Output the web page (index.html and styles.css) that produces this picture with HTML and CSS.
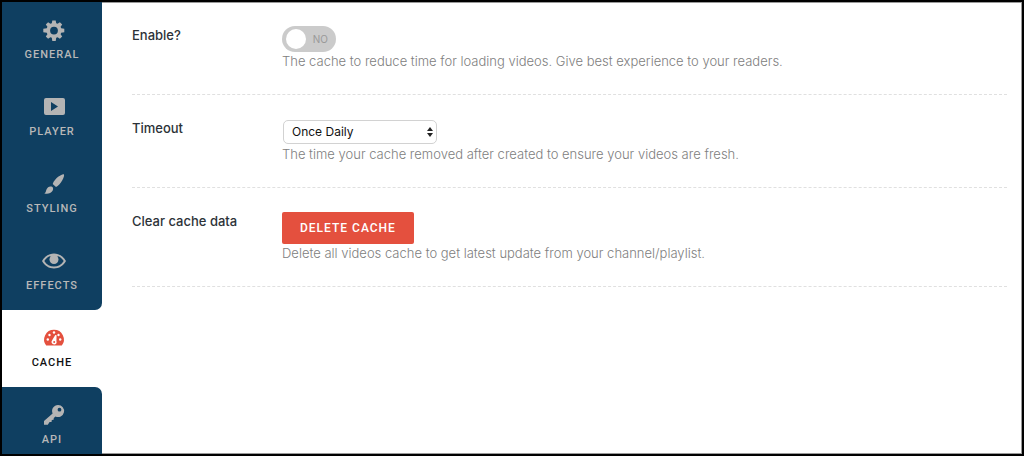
FILE: index.html
```html
<!DOCTYPE html>
<html lang="en">
<head>
<meta charset="utf-8">
<title>Cache settings</title>
<link rel="stylesheet" href="styles.css">
</head>
<body>
<div class="frame">
  <nav class="sidebar" aria-label="Settings sections">
    <a class="tab" href="#general">
      <svg class="icon" viewBox="0 0 20 20" aria-hidden="true"><path fill-rule="evenodd" d="M8.300.5h3.400l.5 2.700 1.400.6 2.300-1.600 2.300 2.300L16.600 6.800l.6 1.400 3.100.5v3.600l-3.100.5-.6 1.400 1.600 2.300-2.300 2.300-2.300-1.600-1.400.6-.5 3.300H8.300l-.5-3.300-1.400-.6-2.300 1.600-2.300-2.300 1.600-2.300-.6-1.400-3.500-.5V8.700l3.500-.5.6-1.400L1.800 4.500l2.300-2.300 2.300 1.600 1.400-.6zM10 6.700a3.900 3.900 0 1 0 0 7.800A3.900 3.900 0 0 0 10 6.700z"/></svg>
      <span>GENERAL</span>
    </a>
    <a class="tab" href="#player">
      <svg class="icon" viewBox="0 0 20 20" aria-hidden="true"><path fill-rule="evenodd" d="M2 1h17q2 0 2 2v13q0 2-2 2H2q-2 0-2-2V3q0-2 2-2zM7 5v9l7-4.500z"/></svg>
      <span>PLAYER</span>
    </a>
    <a class="tab" href="#styling">
      <svg class="icon" viewBox="0 0 20 20" aria-hidden="true"><path d="M19.800.3c.7.7.1 3.200-1.500 5.900-1.700 3-4.200 5.800-6.300 6.800L8.700 9.900C9.600 7.300 12 4.500 14.500 2.600 17 .7 19.100-.3 19.800.3zM7.400 12.600c1.700.5 2.300 2.300 1.200 4.100C7 19.400 3 20.400.3 19.200c1.700-.4 1.500-2 2.300-3.900.9-2.200 2.800-3.300 4.800-2.700z"/></svg>
      <span>STYLING</span>
    </a>
    <a class="tab" href="#effects">
      <svg class="icon icon-wide" viewBox="0 0 24 20" aria-hidden="true"><path fill-rule="evenodd" d="M12 2.500c5 0 9.300 2.700 12 7.500-2.700 4.800-7 7.500-12 7.500S2.700 14.800 0 10c2.700-4.800 7-7.500 12-7.500zM7.600 5.200C5.400 6.200 3.700 7.800 2.300 10c2.300 3.700 5.700 5.600 9.700 5.600s7.400-1.900 9.700-5.600c-1.400-2.200-3.100-3.800-5.300-4.800z"/><circle cx="12" cy="8.500" r="4.500"/></svg>
      <span>EFFECTS</span>
    </a>
    <a class="tab tab-active" href="#cache" aria-current="page">
      <svg class="icon" viewBox="0 0 20 20" aria-hidden="true"><path d="M2.200 17.500A9.800 9.800 0 0 1 10 1.700a9.800 9.800 0 0 1 7.800 15.800z"/><g class="dial"><circle cx="3.800" cy="11.500" r="1.200"/><circle cx="5.500" cy="7" r="1.200"/><circle cx="10" cy="4.500" r="1.200"/><circle cx="14.500" cy="7" r="1.200"/><circle cx="16.200" cy="11.500" r="1.200"/><path d="M11.300 7l1.300.3-.2 5.700c.8 1.700-.3 3.500-2.200 3.500-2.200 0-3.400-2.200-2.200-3.900z"/></g><circle cx="10.200" cy="14" r="1"/></svg>
      <span>CACHE</span>
    </a>
    <a class="tab" href="#api">
      <svg class="icon" viewBox="0 0 20 20" aria-hidden="true"><path fill-rule="evenodd" d="M14 0a6 6 0 1 1-2.500 11.400l-1.700 1.700-.2 1.700-1.800.2-.3 1.900-1.900.2L3.800 19.800H0v-3.900L8.600 8.500A6 6 0 0 1 14 0zM15.500 2.800a1.900 1.900 0 1 0 0 3.800 1.900 1.900 0 0 0 0-3.800z"/></svg>
      <span>API</span>
    </a>
  </nav>
  <main class="content">
    <section class="row">
      <label class="row-title" for="enable">Enable?</label>
      <div class="field">
        <div class="switch">
          <input class="switch-input" type="checkbox" role="switch" id="enable">
          <span class="switch-text" aria-hidden="true">NO</span>
        </div>
        <p class="hint">The cache to reduce time for loading videos. Give best experience to your readers.</p>
      </div>
    </section>
    <section class="row">
      <label class="row-title" for="timeout">Timeout</label>
      <div class="field">
        <div class="picker">
          <select class="picker-select" id="timeout"><option>Once Daily</option></select>
          <svg class="picker-arrows" viewBox="0 0 6 10" aria-hidden="true"><path d="M3 0l3 4H0zM3 10L0 6h6z"/></svg>
        </div>
        <p class="hint">The time your cache removed after created to ensure your videos are fresh.</p>
      </div>
    </section>
    <section class="row">
      <label class="row-title" for="clear">Clear cache data</label>
      <div class="field">
        <button class="button" id="clear" type="button">DELETE CACHE</button>
        <p class="hint">Delete all videos cache to get latest update from your channel/playlist.</p>
      </div>
    </section>
  </main>
</div>
</body>
</html>
```
FILE: styles.css
```css
* {
  box-sizing: border-box;
}

body {
  margin: 0;
  font-family: Inter, Roboto, sans-serif;
  font-size: 13px;
  line-height: 18px;
  color: #2c3238;
  background: #fff;
}

.frame {
  display: flex;
  height: 100vh;
  overflow: hidden;
  border: 2px solid #000;
}

.sidebar {
  flex: none;
  width: 100px;
}

.tab {
  display: flex;
  flex-direction: column;
  align-items: center;
  gap: 7px;
  padding: 18px 0 16px;
  font-family: Roboto, sans-serif;
  font-size: 11px;
  font-weight: 500;
  line-height: 16px;
  letter-spacing: 1px;
  color: #b8b8b8;
  text-decoration: none;
  background: #0f3f61;
}

.tab:has(+ .tab-active) {
  border-bottom-right-radius: 7px;
}

.tab-active + .tab {
  border-top-right-radius: 7px;
}

.tab-active {
  color: #111;
  background: #fff;
}

.icon {
  width: 20px;
  height: 20px;
  margin-left: 4px;
  overflow: visible;
  fill: #b4b4b4;
}

.icon-wide {
  width: 24px;
}

.tab-active .icon {
  fill: #e4503e;
}

.tab-active .dial {
  fill: #fff;
}

.content {
  flex: 1;
  padding: 0 15px 0 30px;
  box-shadow: inset -1px 0 #999, inset 0 -1px #999, inset 0 1px #999;
}

.row {
  display: grid;
  grid-template-columns: 150px 1fr;
  padding: 24px 0;
  border-bottom: 1px dashed #e0e0e0;
}

.row-title {
  font-weight: 500;
}

.hint {
  margin: 0;
  font-weight: 300;
  color: #808080;
}

.switch {
  position: relative;
  width: 54px;
  height: 26px;
}

.switch-input {
  display: block;
  appearance: none;
  width: 100%;
  height: 100%;
  margin: 0;
  padding: 3px 4px;
  border-radius: 13px;
  background: #cbcbcb;
}

.switch-input::before {
  content: "";
  display: block;
  width: 20px;
  height: 20px;
  border-radius: 50%;
  background: #fff;
}

.switch-text {
  position: absolute;
  top: 4px;
  right: 8px;
  font-size: 10px;
  color: #999;
  pointer-events: none;
}

.picker {
  position: relative;
  width: 154px;
  margin: 1px;
}

.picker-select {
  display: block;
  appearance: none;
  width: 100%;
  height: 24px;
  padding: 0 20px 0 8px;
  border: 1px solid #d2d2d2;
  border-radius: 5px;
  font: inherit;
  font-size: 12px;
  color: #111;
  background: #fff;
}

.picker-arrows {
  position: absolute;
  top: 7px;
  right: 4px;
  width: 6px;
  height: 10px;
  fill: #222;
  pointer-events: none;
}

.button {
  display: block;
  height: 32px;
  padding: 0 18px;
  border: 0;
  border-radius: 2px;
  font-family: Roboto, sans-serif;
  font-size: 12px;
  font-weight: 500;
  letter-spacing: 1px;
  color: #fff;
  background: #e4503e;
}
```
